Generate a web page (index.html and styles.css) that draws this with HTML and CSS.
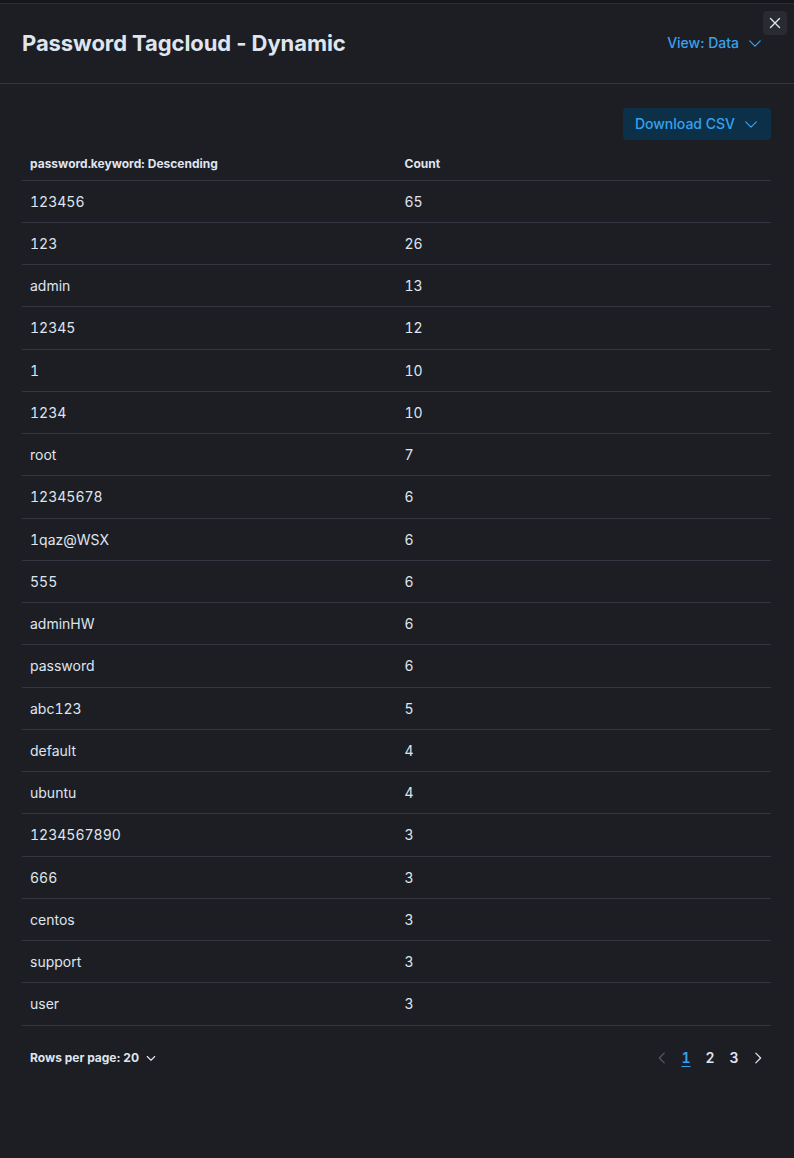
FILE: index.html
```html
<!DOCTYPE html>
<html lang="en">
<head>
<meta charset="utf-8">
<link rel="stylesheet" href="styles.css">
</head>
<body>
<div class="flyout">
  <div class="topstrip"></div>
  <button class="close" aria-label="Close">
    <svg width="12" height="12" viewBox="0 0 12 12"><path d="M1.5 1.5 L10.5 10.5 M10.5 1.5 L1.5 10.5" stroke="#dfe5ef" stroke-width="1.4" stroke-linecap="round" fill="none"/></svg>
  </button>
  <header class="header">
    <h2 class="title">Password Tagcloud - Dynamic</h2>
    <div class="view">View: Data
      <svg class="chev" width="14" height="14" viewBox="0 0 16 16"><path d="M2 5.5 L8 11.5 L14 5.5" stroke="#36a2ef" stroke-width="1.4" fill="none" stroke-linecap="round" stroke-linejoin="round"/></svg>
    </div>
  </header>
  <main class="body">
    <div class="toolbar">
      <button class="csv">Download CSV
        <svg class="chev" width="14" height="14" viewBox="0 0 16 16"><path d="M2 5.5 L8 11.5 L14 5.5" stroke="#36a2ef" stroke-width="1.4" fill="none" stroke-linecap="round" stroke-linejoin="round"/></svg>
      </button>
    </div>
    <table class="table">
      <thead>
        <tr><th>password.keyword: Descending</th><th>Count</th></tr>
      </thead>
      <tbody>
        <tr><td>123456</td><td>65</td></tr>
        <tr><td>123</td><td>26</td></tr>
        <tr><td>admin</td><td>13</td></tr>
        <tr><td>12345</td><td>12</td></tr>
        <tr><td>1</td><td>10</td></tr>
        <tr><td>1234</td><td>10</td></tr>
        <tr><td>root</td><td>7</td></tr>
        <tr><td>12345678</td><td>6</td></tr>
        <tr><td>1qaz@WSX</td><td>6</td></tr>
        <tr><td>555</td><td>6</td></tr>
        <tr><td>adminHW</td><td>6</td></tr>
        <tr><td>password</td><td>6</td></tr>
        <tr><td>abc123</td><td>5</td></tr>
        <tr><td>default</td><td>4</td></tr>
        <tr><td>ubuntu</td><td>4</td></tr>
        <tr><td>1234567890</td><td>3</td></tr>
        <tr><td>666</td><td>3</td></tr>
        <tr><td>centos</td><td>3</td></tr>
        <tr><td>support</td><td>3</td></tr>
        <tr><td>user</td><td>3</td></tr>
      </tbody>
    </table>
    <div class="pager">
      <div class="rows">Rows per page: 20
        <svg width="12" height="12" viewBox="0 0 16 16"><path d="M3 6 L8 11 L13 6" stroke="#dfe5ef" stroke-width="1.5" fill="none" stroke-linecap="round" stroke-linejoin="round"/></svg>
      </div>
      <nav class="pages">
        <svg class="arrow" width="14" height="14" viewBox="0 0 16 16"><path d="M10.5 2.5 L5 8 L10.5 13.5" stroke="#535966" stroke-width="1.4" fill="none" stroke-linecap="round" stroke-linejoin="round"/></svg>
        <span class="page current">1</span>
        <span class="page">2</span>
        <span class="page">3</span>
        <svg class="arrow" width="14" height="14" viewBox="0 0 16 16"><path d="M5.5 2.5 L11 8 L5.5 13.5" stroke="#dfe5ef" stroke-width="1.4" fill="none" stroke-linecap="round" stroke-linejoin="round"/></svg>
      </nav>
    </div>
  </main>
</div>
</body>
</html>
```

FILE: styles.css
```css
* { box-sizing: border-box; }
html, body { margin: 0; padding: 0; }
body {
  background: #1d1e24;
  font-family: Inter, "Noto Sans", sans-serif;
  color: #dfe5ef;
}
.flyout {
  position: relative;
  width: 794px;
  height: 1158px;
  background: #1d1e24;
}
.topstrip {
  height: 4px;
  background: #16171c;
  border-bottom: 1px solid #2b2d35;
}
.close {
  position: absolute;
  top: 11px;
  right: 7px;
  width: 24px;
  height: 24px;
  border: none;
  border-radius: 4px;
  background: #292a32;
  display: flex;
  align-items: center;
  justify-content: center;
  padding: 0;
}
.header {
  height: 80px;
  padding: 0 32px 0 22px;
  display: flex;
  align-items: center;
  justify-content: space-between;
  border-bottom: 1px solid #343741;
}
.title {
  margin: 0 0 2px 0;
  font-size: 22px;
  font-weight: 700;
  color: #dfe5ef;
  letter-spacing: -0.08px;
}
.view {
  display: flex;
  align-items: center;
  gap: 9px;
  font-size: 14px;
  font-weight: 500;
  color: #36a2ef;
  margin-bottom: 2px;
}
.body {
  padding: 24px 23px 0 22px;
}
.toolbar {
  display: flex;
  justify-content: flex-end;
}
.csv {
  height: 32px;
  padding: 0 13px 0 12px;
  border: none;
  border-radius: 4px;
  background: #0c3048;
  color: #36a2ef;
  font-family: Inter, "Noto Sans", sans-serif;
  font-size: 14px;
  font-weight: 500;
  display: flex;
  align-items: center;
  gap: 9px;
  padding-bottom: 1px;
}
.table {
  width: 100%;
  border-collapse: collapse;
  table-layout: fixed;
  margin-top: 5px;
  font-variant-numeric: tabular-nums;
}
.table th {
  text-align: left;
  font-size: 12px;
  font-weight: 700;
  color: #dfe5ef;
  padding: 2px 8px 0;
  height: 35px;
  vertical-align: middle;
  border-bottom: 1px solid #343741;
}
.table td {
  font-size: 14px;
  color: #dfe5ef;
  padding: 0 8px;
  height: 42.25px;
  vertical-align: middle;
  border-bottom: 1px solid #343741;
}
.pager {
  display: flex;
  justify-content: space-between;
  align-items: center;
  height: 64px;
  padding: 0 8px;
}
.rows {
  display: flex;
  align-items: center;
  gap: 6px;
  font-size: 12px;
  font-weight: 700;
  color: #dfe5ef;
}
.pages {
  display: flex;
  align-items: center;
  margin-right: -7px;
  font-variant-numeric: tabular-nums;
}
.arrow { margin: 0 5px; }
.page {
  width: 24px;
  text-align: center;
  font-size: 14px;
  font-weight: 600;
  color: #dfe5ef;
}
.page.current {
  color: #36a2ef;
  text-decoration: underline;
  text-underline-offset: 3px;
}
```
